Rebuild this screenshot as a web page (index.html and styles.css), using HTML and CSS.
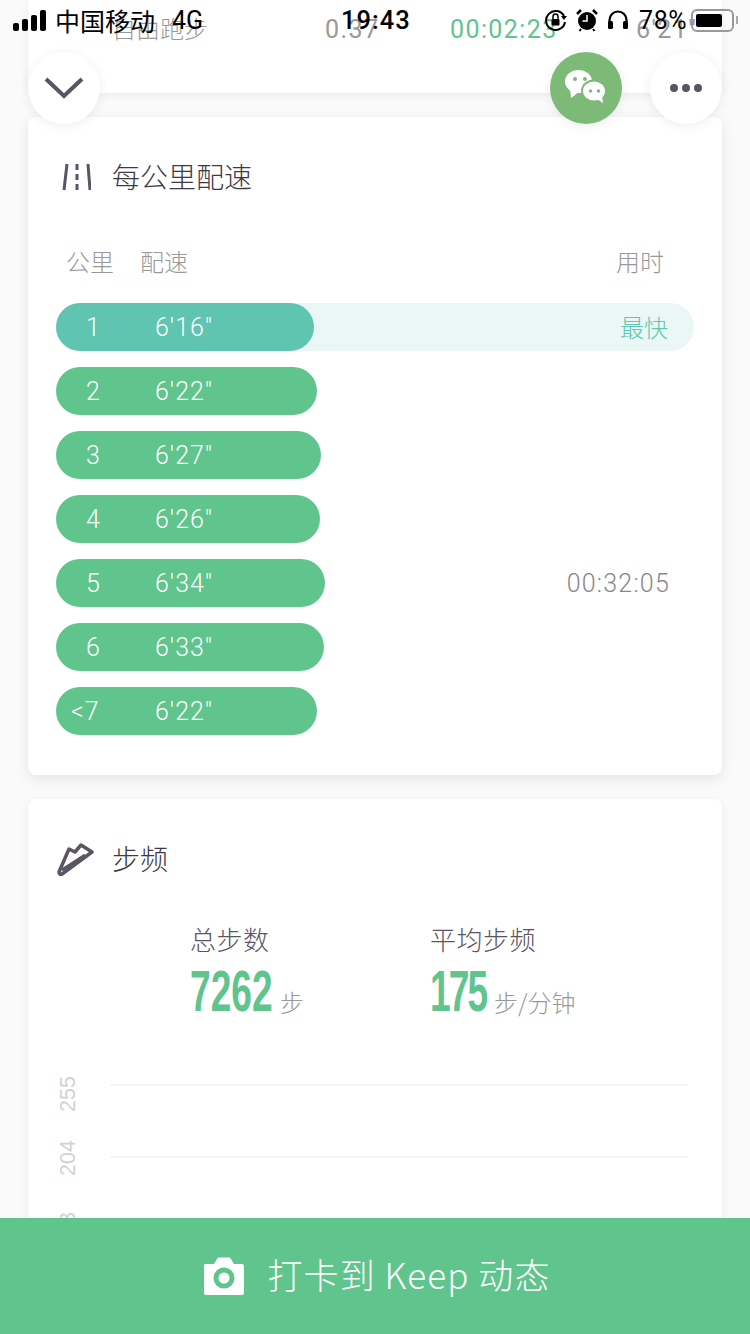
FILE: index.html
```html
<!DOCTYPE html>
<html lang="zh-CN">

<head>
    <meta charset="UTF-8">
    <meta name="viewport" content="width=device-width, initial-scale=1.0">
    <title>跑步详情</title>
    <link rel="stylesheet" href="styles.css">
</head>

<body>
    <div class="page">
        <div class="card top-card">
            <div class="top-row">
                <span class="top-name">自由跑步</span>
                <span class="top-dist">0.37</span>
                <span class="top-time">00:02:23</span>
                <span class="top-pace">6'21"</span>
            </div>
        </div>

        <div class="card pace-card">
            <div class="card-title">
                <svg class="title-icon" width="30" height="28" viewBox="0 0 30 28">
                    <path d="M6 1 L3 27 M27 1 L29 27" stroke="#5a5463" stroke-width="3" fill="none"/>
                    <path d="M16 1 V7 M16 11 V17 M16 21 V27" stroke="#5a5463" stroke-width="3" fill="none"/>
                </svg>
                <span>每公里配速</span>
            </div>
            <div class="pace-head">
                <span class="head-km">公里</span>
                <span class="head-pace">配速</span>
                <span class="head-used">用时</span>
            </div>
            <div class="pace-list">
                <div class="pace-row fastest-row">
                    <div class="pace-bar fastest" style="width: 258px"><span class="km">1</span><span>6'16"</span></div>
                    <span class="fastest-label">最快</span>
                </div>
                <div class="pace-row">
                    <div class="pace-bar" style="width: 261px"><span class="km">2</span><span>6'22"</span></div>
                </div>
                <div class="pace-row">
                    <div class="pace-bar" style="width: 265px"><span class="km">3</span><span>6'27"</span></div>
                </div>
                <div class="pace-row">
                    <div class="pace-bar" style="width: 264px"><span class="km">4</span><span>6'26"</span></div>
                </div>
                <div class="pace-row">
                    <div class="pace-bar" style="width: 269px"><span class="km">5</span><span>6'34"</span></div>
                    <span class="used">00:32:05</span>
                </div>
                <div class="pace-row">
                    <div class="pace-bar" style="width: 268px"><span class="km">6</span><span>6'33"</span></div>
                </div>
                <div class="pace-row">
                    <div class="pace-bar" style="width: 261px"><span class="km km-last">&lt;7</span><span>6'22"</span></div>
                </div>
            </div>
        </div>

        <div class="card step-card">
            <div class="card-title">
                <svg class="title-icon" width="38" height="34" viewBox="0 0 38 34">
                    <path d="M3 30 L13 7 L19 10 L25 3 L36 10 L6 32 C4 32.500 3 32 3 30 Z" stroke="#5a5463" stroke-width="3.500" stroke-linejoin="round" fill="none"/>
                    <path d="M6 28 L29 13" stroke="#5a5463" stroke-width="3" fill="none"/>
                </svg>
                <span>步频</span>
            </div>
            <div class="stats">
                <div class="stat stat-total">
                    <div class="stat-label">总步数</div>
                    <div class="stat-value"><b class="num num-total">7262</b><span class="unit">步</span></div>
                </div>
                <div class="stat stat-avg">
                    <div class="stat-label">平均步频</div>
                    <div class="stat-value"><b class="num num-avg">175</b><span class="unit">步/分钟</span></div>
                </div>
            </div>
            <div class="chart">
                <div class="chart-row"><span class="axis">255</span><div class="grid-line"></div></div>
                <div class="chart-row"><span class="axis">204</span><div class="grid-line"></div></div>
                <div class="chart-row"><span class="axis">153</span><div class="grid-line"></div></div>
            </div>
        </div>

        <div class="status-bar">
            <div class="status-left">
                <div class="signal"><i></i><i></i><i></i><i></i></div>
                <span>中国移动</span>
                <span class="net">4G</span>
            </div>
            <span class="clock">19:43</span>
            <div class="status-right">
                <svg width="24" height="24" viewBox="0 0 24 24">
                    <path d="M20 8 A9.500 9.500 0 1 0 21 14" stroke="#000" stroke-width="2" fill="none"/>
                    <path d="M17 8 H23 L20 12 Z" fill="#000"/>
                    <rect x="7.500" y="11" width="8" height="6.500" rx="1" fill="#000"/>
                    <path d="M9 11 V8.500 A2.500 2.500 0 0 1 14 8.500 V11" stroke="#000" stroke-width="1.500" fill="none"/>
                </svg>
                <svg width="24" height="24" viewBox="0 0 24 24">
                    <circle cx="12" cy="13" r="9" fill="#000"/>
                    <path d="M12 7 V13 H7.500" stroke="#fff" stroke-width="1.500" fill="none"/>
                    <path d="M2 6 L6 2 M22 6 L18 2" stroke="#000" stroke-width="2.500"/>
                    <path d="M6 21 L4.500 23 M18 21 L19.500 23" stroke="#000" stroke-width="2"/>
                </svg>
                <svg width="24" height="22" viewBox="0 0 24 22">
                    <path d="M3.500 16 V11 A8.500 8.500 0 0 1 20.500 11 V16" stroke="#000" stroke-width="2.200" fill="none"/>
                    <rect x="2" y="12" width="5" height="8" rx="1.500" fill="#000"/>
                    <rect x="17" y="12" width="5" height="8" rx="1.500" fill="#000"/>
                </svg>
                <span class="percent">78%</span>
                <div class="battery"><div class="battery-level"></div></div>
                <div class="battery-tip"></div>
            </div>
        </div>

        <div class="float-btn btn-down">
            <svg width="40" height="24" viewBox="0 0 40 24">
                <path d="M2 3 L20 20 L38 3" stroke="#5a5463" stroke-width="4" fill="none"/>
            </svg>
        </div>
        <div class="float-btn btn-wechat">
            <svg width="42" height="36" viewBox="0 0 42 36">
                <ellipse cx="13.500" cy="11.500" rx="13.500" ry="11.500" fill="#fff"/>
                <path d="M5 18 L6 28 L14 22 Z" fill="#fff"/>
                <ellipse cx="29" cy="21" rx="13" ry="11.500" fill="#7db977"/>
                <ellipse cx="29" cy="21" rx="11" ry="9.500" fill="#fff"/>
                <path d="M32 29 L38 33 L37 26 Z" fill="#fff"/>
                <circle cx="10" cy="9" r="2" fill="#7db977"/>
                <circle cx="20" cy="9" r="2" fill="#7db977"/>
                <circle cx="25.500" cy="21" r="1.700" fill="#7db977"/>
                <circle cx="33.500" cy="21" r="1.700" fill="#7db977"/>
            </svg>
        </div>
        <div class="float-btn btn-more">
            <span class="dot"></span><span class="dot"></span><span class="dot"></span>
        </div>

        <div class="checkin-bar">
            <svg width="42" height="38" viewBox="0 0 42 38">
                <path d="M2 7 H11 L14 2 Q14.500 0.500 16 0.500 H26 Q27.500 0.500 28 2 L31 7 H39 Q41 7 41 9 V36 Q41 38 39 38 H3 Q1 38 1 36 V9 Q1 7 2 7 Z" fill="#fff"/>
                <circle cx="21" cy="21" r="10.500" fill="#60c48d"/>
                <circle cx="21" cy="21" r="5.500" fill="#fff"/>
            </svg>
            <span class="checkin-text">打卡到 Keep 动态</span>
        </div>
    </div>
</body>

</html>
```

FILE: styles.css
```css
* {
    box-sizing: border-box;
}

html, body {
    margin: 0;
    padding: 0;
}

body {
    font-family: "Noto Sans CJK SC", "Noto Sans", sans-serif;
    font-weight: 300;
    color: #3e3a45;
}

.page {
    position: relative;
    width: 750px;
    height: 1334px;
    overflow: hidden;
    padding: 0 28px;
    background-color: #fafafa;
}

.card {
    background-color: #fff;
    border-radius: 8px;
    box-shadow: 0 2px 10px rgba(0, 0, 0, 0.06);
}

.top-card {
    height: 93px;
    border-radius: 0 0 8px 8px;
    margin-bottom: 24px;
    padding-top: 11px;
}

.top-row {
    display: flex;
    align-items: center;
    height: 36px;
    font-family: Roboto, "Noto Sans CJK SC", sans-serif;
    font-size: 25px;
    font-weight: 400;
    color: #999;
    letter-spacing: 1.4px;
}

.top-name {
    width: 297px;
    padding-left: 84px;
    margin-bottom: 4px;
    font-family: "Noto Sans CJK SC", sans-serif;
    font-size: 24px;
    font-weight: 300;
    letter-spacing: 0;
}

.top-dist {
    width: 125px;
}

.top-time {
    width: 186px;
    color: #60c48d;
}

.pace-card {
    height: 658px;
    margin-bottom: 24px;
    padding: 42px 28px 0;
    box-shadow: 0 4px 14px rgba(0, 0, 0, 0.09);
}

.card-title {
    display: flex;
    align-items: center;
    height: 36px;
    font-size: 28px;
}

.card-title span {
    margin-bottom: 2px;
}

.pace-card .card-title {
    padding-left: 5px;
}

.pace-card .card-title span {
    margin-left: 21px;
}

.step-card .card-title span {
    margin-left: 18px;
}

.pace-head {
    display: flex;
    height: 36px;
    align-items: center;
    margin-top: 47px;
    margin-bottom: 25px;
    font-size: 24px;
    color: #999;
}

.head-km {
    margin-left: 10px;
    width: 74px;
}

.head-pace {
    width: 476px;
}

.pace-list {
    display: flex;
    flex-direction: column;
    gap: 16px;
}

.pace-row {
    display: flex;
    align-items: center;
    justify-content: space-between;
    height: 48px;
    border-radius: 24px;
}

.fastest-row {
    background-color: #ebf7f4;
}

.pace-bar {
    display: flex;
    align-items: center;
    height: 48px;
    border-radius: 24px;
    background-color: #60c48d;
    color: #fff;
    font-family: Roboto, sans-serif;
    font-size: 25px;
    font-weight: 300;
    letter-spacing: 1px;
}

.pace-bar.fastest {
    background-color: #5fc4b0;
}

.km {
    width: 99px;
    padding-left: 30px;
}

.km-last {
    padding-left: 15px;
}

.fastest-label {
    margin-right: 26px;
    margin-bottom: 2px;
    font-size: 24px;
    color: #5fc9ae;
}

.used {
    margin-right: 24px;
    font-family: Roboto, sans-serif;
    font-size: 25px;
    font-weight: 300;
    letter-spacing: 1.200px;
    color: #888;
}

.step-card {
    height: 560px;
    padding: 42px 28px 0;
}

.stats {
    display: flex;
    margin-top: 44px;
}

.stat-total {
    margin-left: 134px;
    width: 240px;
}

.stat-label {
    font-size: 26px;
    line-height: 36px;
    letter-spacing: 0.5px;
    color: #5a5463;
}

.stat-value {
    display: flex;
    align-items: flex-end;
    height: 56px;
    margin-top: 6px;
}

.num {
    display: inline-block;
    font-family: "Liberation Sans", sans-serif;
    font-size: 58px;
    line-height: 56px;
    font-weight: 700;
    color: #60c48d;
    transform: scaleX(0.64);
    transform-origin: left center;
}

.num-total {
    width: 90px;
}

.num-avg {
    width: 64px;
    letter-spacing: -3px;
}

.unit {
    font-size: 24px;
    line-height: 34px;
    color: #999;
}

.chart {
    margin-top: 65px;
}

.chart-row {
    display: flex;
    height: 72px;
    align-items: flex-start;
}

.axis {
    flex: none;
    width: 24px;
    height: 36px;
    margin-top: -16px;
    margin-right: 30px;
    font-family: "Liberation Sans", sans-serif;
    font-size: 21.500px;
    line-height: 24px;
    color: #d2d2d2;
    writing-mode: vertical-rl;
    transform: rotate(180deg);
}

.chart-row:first-child .axis {
    margin-top: -8px;
}

.grid-line {
    flex: 1;
    height: 2px;
    margin-right: 6px;
    background-color: #f5f5f5;
}

/* things lying over the page */
.status-bar {
    position: absolute;
    top: 0;
    left: 0;
    width: 750px;
    height: 40px;
    display: flex;
    align-items: center;
    padding: 0 0 0 13px;
    color: #000;
    font-family: Roboto, "Noto Sans CJK SC", sans-serif;
    font-size: 25px;
    font-weight: 400;
}

.status-left {
    display: flex;
    align-items: center;
    width: 328px;
}

.signal {
    display: flex;
    align-items: flex-end;
    gap: 3px;
    margin-right: 9px;
}

.signal i {
    display: block;
    width: 6px;
    border-radius: 2px;
    background-color: #000;
}

.signal i:nth-child(1) { height: 8px; }
.signal i:nth-child(2) { height: 12px; }
.signal i:nth-child(3) { height: 16px; }
.signal i:nth-child(4) { height: 21px; }

.net {
    margin-left: 17px;
}

.clock {
    font-weight: 500;
    font-size: 25.500px;
    letter-spacing: 1px;
}

.status-right {
    display: flex;
    align-items: center;
    gap: 7px;
    margin-left: auto;
    padding-right: 12px;
}

.percent {
    margin-left: 2px;
    letter-spacing: 0.5px;
}

.battery {
    width: 43px;
    height: 23px;
    padding: 3px;
    margin-left: -3px;
    border: 2px solid #999;
    border-radius: 6px;
}

.battery-level {
    width: 78%;
    height: 100%;
    border-radius: 2px;
    background-color: #000;
}

.battery-tip {
    width: 2px;
    height: 8px;
    margin-left: -5px;
    background-color: #aaa;
}

.float-btn {
    position: absolute;
    top: 52px;
    width: 72px;
    height: 72px;
    display: flex;
    align-items: center;
    justify-content: center;
    border-radius: 50%;
    background-color: #fff;
    box-shadow: 0 2px 12px rgba(0, 0, 0, 0.07);
}

.btn-down {
    left: 28px;
}

.btn-wechat {
    left: 550px;
    background-color: #7db977;
}

.btn-more {
    left: 650px;
    gap: 4px;
}

.dot {
    width: 8px;
    height: 8px;
    border-radius: 50%;
    background-color: #5a5463;
}

.checkin-bar {
    position: absolute;
    left: 0;
    bottom: 0;
    width: 750px;
    height: 116px;
    display: flex;
    align-items: center;
    justify-content: center;
    gap: 22px;
    padding-left: 4px;
    background-color: #60c48d;
    color: #fff;
    font-size: 35px;
    letter-spacing: 1.100px;
}

.checkin-text {
    margin-bottom: 5px;
}
```
